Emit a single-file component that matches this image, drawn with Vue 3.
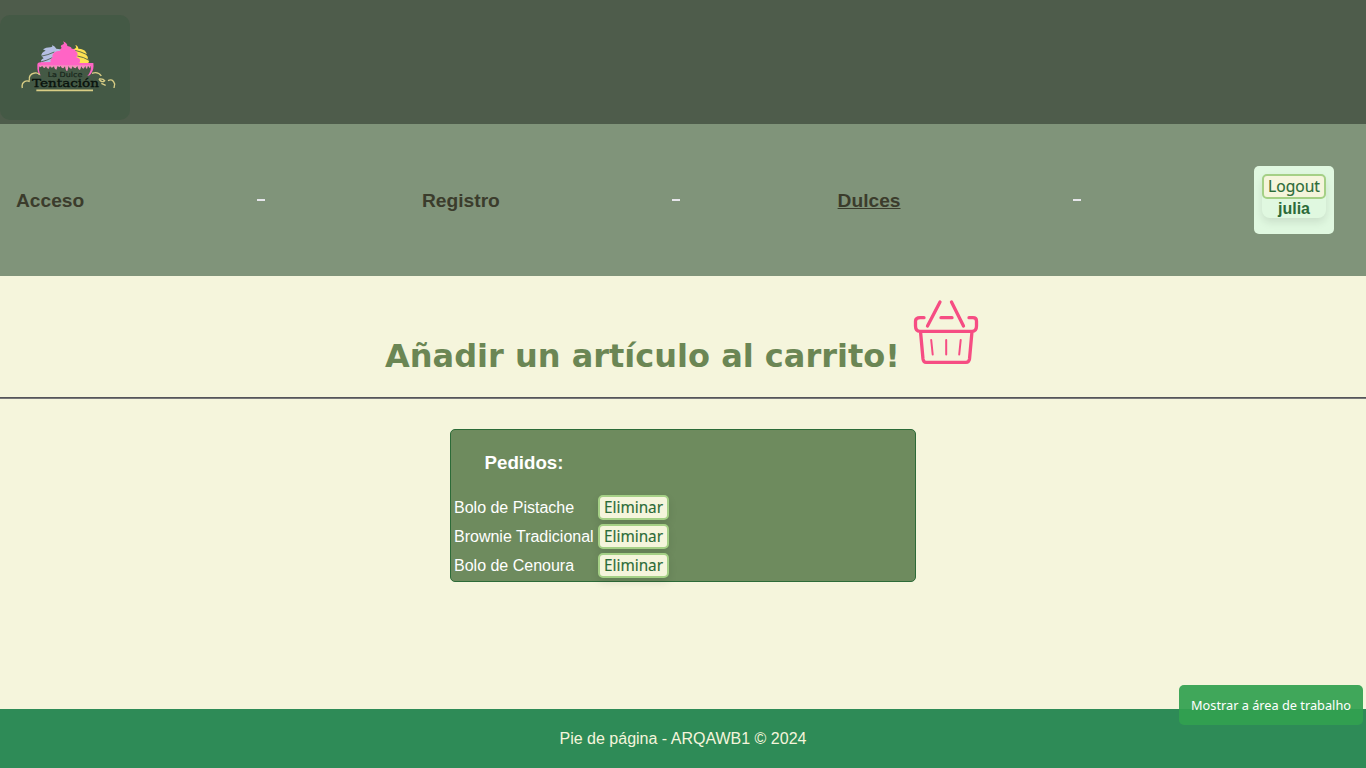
<script setup>
const orders = ['Bolo de Pistache', 'Brownie Tradicional', 'Bolo de Cenoura']
</script>

<template>
  <div class="page">
    <header class="header">
      <div class="logo">
        <svg width="105" height="60" viewBox="0 0 315 180">
          <path fill="#b5bfe3" d="M78 83Q76 74 86 70L79 63Q78 52 92 47L84 43Q92 37 106 37Q115 36 111 30Q120 33 124 41L146 44V86H78Z" />
          <path fill="#ffe352" d="M166 45Q180 43 184 37Q182 33 181 30Q190 33 190 41Q207 42 212 50Q217 55 214 60Q221 66 218 72Q225 77 220 84H171Z" />
          <path fill="none" stroke="#445945" stroke-width="2.500" d="M77 64Q100 60 118 51M77 81Q97 76 112 68M180 46Q198 50 216 59M187 63Q206 66 222 76" />
          <path fill="#ff64c5" d="M140 39Q133 32 145 28Q149 26 144 19Q158 25 157 33Q170 35 170 41Q181 40 182 49Q188 52 188 58Q187 64 184 67Q195 70 195 76Q196 81 193 84H235Q238 103 228 116Q225 121 217 123Q230 109 227 93H75Q68 101 77 122Q66 115 67 92Q66 82 77 82L107 81Q104 72 113 68Q109 60 119 52Q123 48 136 47Q133 42 140 39Z" />
          <path fill="#f58fbd" d="M71 91H227L225 100Q221 96 219 92L216 102Q212 101 211 93L206 101Q201 101 199 94L195 105Q189 104 187 93L182 100Q176 100 173 94L169 102Q163 101 161 93L157 108Q152 109 150 94L145 100Q140 101 137 93L133 97L128 93L124 104Q119 104 117 94L111 98Q107 98 105 93L101 101Q96 102 93 94L89 99Q84 99 82 93L76 97Z" />
          <g fill="none" stroke="#d8cd85" stroke-width="4">
            <path d="M22 159Q19 144 30 139Q37 136 44 140M43 137Q40 117 59 114Q70 112 74 120M231 115Q249 108 259 123M252 132Q264 130 269 137Q261 145 252 132M259 145L272 151M279 137Q293 129 299 147L297 159" />
            <path stroke-width="5" d="M64 166H234" />
          </g>
          <text class="brand-small" x="98" y="127" textLength="104" lengthAdjust="spacingAndGlyphs">La Dulce</text>
          <text class="brand-large" x="51" y="156" textLength="201" lengthAdjust="spacingAndGlyphs">Tentación</text>
        </svg>
      </div>
    </header>

    <nav class="nav">
      <a class="link">Acceso</a>
      <i class="dash dash-one"></i>
      <a class="link registro">Registro</a>
      <i class="dash dash-two"></i>
      <a class="link dulces">Dulces</a>
      <i class="dash dash-three"></i>
      <div class="account">
        <div class="user">
          <button class="button logout"><svg width="52" height="21"><text x="0" y="16" textLength="52" lengthAdjust="spacingAndGlyphs">Logout</text></svg></button>
          <strong>julia</strong>
        </div>
      </div>
    </nav>

    <main class="main">
      <div class="heading">
        <h1>Añadir un artículo al carrito!</h1>
        <svg class="basket" width="66" height="67" viewBox="0 0 66 67" fill="none" stroke="#f64d83" stroke-width="3.300" stroke-linecap="round" stroke-linejoin="round">
          <path d="M27 3L14.500 27M38.500 3L50.500 27M28 18.700H39M11 18.700H7Q2.500 18.700 2.500 22V27Q2.500 32.300 7 32.300H59Q63.500 32.300 63.500 27V22Q63.500 18.700 60 18.700H56M7.500 32.500L10 60Q10.500 63.300 13 63.300H53Q56 63.300 56.500 60L59 32.500" />
          <path stroke-width="2" d="M18.200 41L19.700 55.500M33.200 41V55.500M47.700 41L46.200 55.500" />
        </svg>
      </div>
      <hr class="rule">
      <section class="orders">
        <h3>Pedidos:</h3>
        <div v-for="item in orders" :key="item" class="order">
          <span>{{ item }}</span>
          <button class="button"><svg width="59" height="21"><text x="0" y="16" textLength="59" lengthAdjust="spacingAndGlyphs">Eliminar</text></svg></button>
        </div>
      </section>
    </main>

    <footer class="footer">Pie de página - ARQAWB1 © 2024</footer>
    <div class="desktop-tip"><svg width="162" height="20"><text x="0" y="15" textLength="160" lengthAdjust="spacingAndGlyphs">Mostrar a área de trabalho</text></svg></div>
  </div>
</template>

<style>
body { margin: 0; overflow: hidden; }
</style>

<style scoped>
.page {
  position: relative;
  display: flex;
  flex-direction: column;
  width: 1366px;
  height: 768px;
  background: #f5f5dc;
  font: 16px/18px "Liberation Sans", Arial, sans-serif;
}
.header { height: 124px; box-sizing: border-box; padding-top: 15px; background: #4e5c4b; }
.logo { width: 130px; height: 105px; box-sizing: border-box; padding: 20px 0 0 15px; border-radius: 10px; background: #445945; }
.logo svg { display: block; }
.brand-small { font: 21px "DejaVu Sans", sans-serif; fill: #17251b; stroke: #17251b; stroke-width: .6; }
.brand-large { font: 33px "DejaVu Serif", serif; fill: #08120c; stroke: #08120c; stroke-width: 1; }
.nav { height: 152px; box-sizing: border-box; padding-left: 16px; display: flex; align-items: center; background: #80947a; }
.link { font-size: 19.2px; line-height: 22px; font-weight: bold; color: #3b3c2c; margin-top: 2px; }
.registro { width: 78px; margin-left: 157px; }
.dulces { width: 62px; margin-left: 157.6px; margin-right: .4px; text-decoration: underline; }
.link:first-child { width: 68px; }
.dash { width: 8px; height: 2px; background: #e6e6eb; }
.dash-one, .dash-three { margin-left: 173px; }
.dash-two { margin-left: 172px; }
.account { margin-left: 173px; width: 80px; height: 68px; padding: 8px; box-sizing: border-box; background: #e0f8e0; border-radius: 5px; }
.user { height: 44px; border-radius: 8px; box-shadow: 0 4px 8px rgba(0, 0, 0, .1); text-align: center; color: #2c6b38; }
.user strong { display: block; line-height: 19px; }
.button { display: block; height: 25px; box-sizing: border-box; padding: 0 4px; border: 2px solid #a5d086; border-radius: 5px; background: #f5f5dc; box-shadow: 0 4px 8px rgba(0, 0, 0, .1); }
.button svg { display: block; overflow: visible; }
.button text { font: 16.5px "Noto Sans", sans-serif; fill: #2c6b38; stroke: #2c6b38; stroke-width: .15; }
.logout { box-shadow: none; }
.main { height: 433px; }
.heading { display: flex; height: 121px; }
h1 { width: 515px; margin: 61px 0 0 385px; font: bold 32px/38px "DejaVu Sans", sans-serif; color: #6b8654; white-space: nowrap; }
.basket { margin: 23px 0 0 13px; }
.rule { height: 2px; margin: 0; border: 0; background: linear-gradient(#555559 50%, #777779 50%); }
.orders { width: 466px; height: 153px; box-sizing: border-box; margin: 30px auto 0; border: 1px solid #2c6b38; border-radius: 5px; background: #6e8b5e; color: white; }
.orders h3 { margin: 22px 0 21px 33.500px; font-size: 18.72px; line-height: 22px; }
.order { display: flex; align-items: center; height: 25px; margin-bottom: 4px; padding-left: 3px; }
.order span { width: 144px; }
.footer { height: 59px; line-height: 59px; text-align: center; background: #2e8b57; color: #f5f5dc; }
.desktop-tip { position: absolute; left: 1179px; top: 685px; width: 184px; height: 40px; padding: 10px 10px 10px 12px; box-sizing: border-box; border-radius: 5px; background: rgba(49, 160, 80, .93); }
.desktop-tip svg { display: block; overflow: visible; }
.desktop-tip text { font: 13px "Noto Sans", sans-serif; fill: white; }
</style>
